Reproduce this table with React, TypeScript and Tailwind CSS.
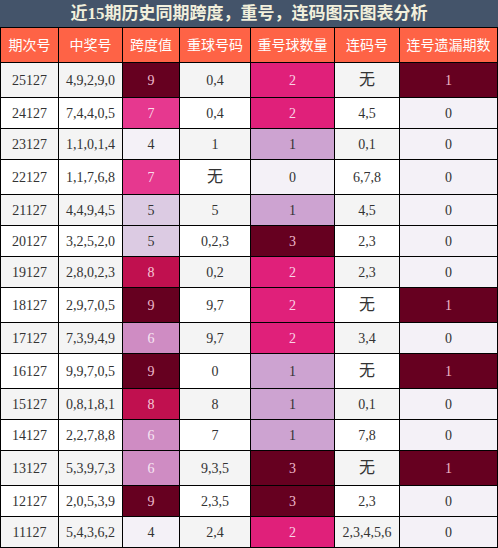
import React from "react"

type Row = [string, string, number, string, number, string, number]

const rows: Row[] = [
    ["25127", "4,9,2,9,0", 9, "0,4", 2, "无", 1],
    ["24127", "7,4,4,0,5", 7, "0,4", 2, "4,5", 0],
    ["23127", "1,1,0,1,4", 4, "1", 1, "0,1", 0],
    ["22127", "1,1,7,6,8", 7, "无", 0, "6,7,8", 0],
    ["21127", "4,4,9,4,5", 5, "5", 1, "4,5", 0],
    ["20127", "3,2,5,2,0", 5, "0,2,3", 3, "2,3", 0],
    ["19127", "2,8,0,2,3", 8, "0,2", 2, "2,3", 0],
    ["18127", "2,9,7,0,5", 9, "9,7", 2, "无", 1],
    ["17127", "7,3,9,4,9", 6, "9,7", 2, "3,4", 0],
    ["16127", "9,9,7,0,5", 9, "0", 1, "无", 1],
    ["15127", "0,8,1,8,1", 8, "8", 1, "0,1", 0],
    ["14127", "2,2,7,8,8", 6, "7", 1, "7,8", 0],
    ["13127", "5,3,9,7,3", 6, "9,3,5", 3, "无", 1],
    ["12127", "2,0,5,3,9", 9, "2,3,5", 3, "2,3", 0],
    ["11127", "5,4,3,6,2", 4, "2,4", 2, "2,3,4,5,6", 0],
]

const headers = ["期次号", "中奖号", "跨度值", "重球号码", "重号球数量", "连码号", "连号遗漏期数"]

// span colours
const spanColor: Record<number, string> = {
    9: "bg-[#660020] text-[#efb9cb]",
    8: "bg-[#c0104f] text-[#f6c9d9]",
    7: "bg-[#e6388f] text-[#fbdbea]",
    6: "bg-[#cf8cc3] text-[#f7e6f3]",
    5: "bg-[#dccbe3] text-[#333333]",
    4: "bg-[#f4f1f7] text-[#333333]",
}

const repeatColor: Record<number, string> = {
    3: "bg-[#660020] text-[#efb9cb]",
    2: "bg-[#e0207a] text-[#fbd3e5]",
    1: "bg-[#cda3d1] text-[#333333]",
    0: "bg-[#f4f1f7] text-[#333333]",
}

const missColor: Record<number, string> = {
    1: "bg-[#660020] text-[#efb9cb]",
    0: "bg-[#f4f1f7] text-[#333333]",
}

const widths = ["w-[58px]", "w-[64px]", "w-[57px]", "w-[71px]", "w-[84px]", "w-[65px]", "w-[98px]"]

function Cell({ w, cls, children }: { w: string; cls: string; children: React.ReactNode }) {
    return (
        <div className={`${w} shrink-0 flex items-center justify-center border-r border-black ${cls}`}>
            {children}
        </div>
    )
}

export default function App() {
    return (
        <div
            className="w-[498px] h-[548px] bg-white overflow-hidden"
            style={{ fontFamily: '"Liberation Serif", "Noto Sans CJK SC", serif' }}
        >
            {/* Title */}
            <div className="h-[28px] bg-[#44546a] border-b border-black flex items-center justify-center text-[17px] font-bold text-[#f2f0dc]">
                近15期历史同期跨度，重号，连码图示图表分析
            </div>

            {/* Header */}
            <div className="h-[35px] flex border-l border-b border-black bg-[#fe6346] text-white text-[14px]">
                {headers.map((h, i) => (
                    <Cell key={h} w={widths[i]} cls="">
                        {h}
                    </Cell>
                ))}
            </div>

            {/* Rows */}
            {rows.map((r, idx) => {
                const tall = r[5] === "无" || r[3] === "无"
                const zebra = idx % 2 === 0 ? "bg-[#f4f4f4] text-[#333333]" : "bg-white text-[#333333]"
                return (
                    <div
                        key={r[0]}
                        className={`flex border-l border-b border-black text-[14px] ${tall ? "h-[35px]" : "h-[31px]"}`}
                    >
                        <Cell w={widths[0]} cls={zebra}>{r[0]}</Cell>
                        <Cell w={widths[1]} cls={zebra}>{r[1]}</Cell>
                        <Cell w={widths[2]} cls={spanColor[r[2]]}>{r[2]}</Cell>
                        <Cell w={widths[3]} cls={zebra}>
                            {r[3] === "无" ? <span className="text-[16px]">无</span> : r[3]}
                        </Cell>
                        <Cell w={widths[4]} cls={repeatColor[r[4]]}>{r[4]}</Cell>
                        <Cell w={widths[5]} cls={zebra}>
                            {r[5] === "无" ? <span className="text-[16px]">无</span> : r[5]}
                        </Cell>
                        <Cell w={widths[6]} cls={missColor[r[6]]}>{r[6]}</Cell>
                    </div>
                )
            })}
        </div>
    )
}
